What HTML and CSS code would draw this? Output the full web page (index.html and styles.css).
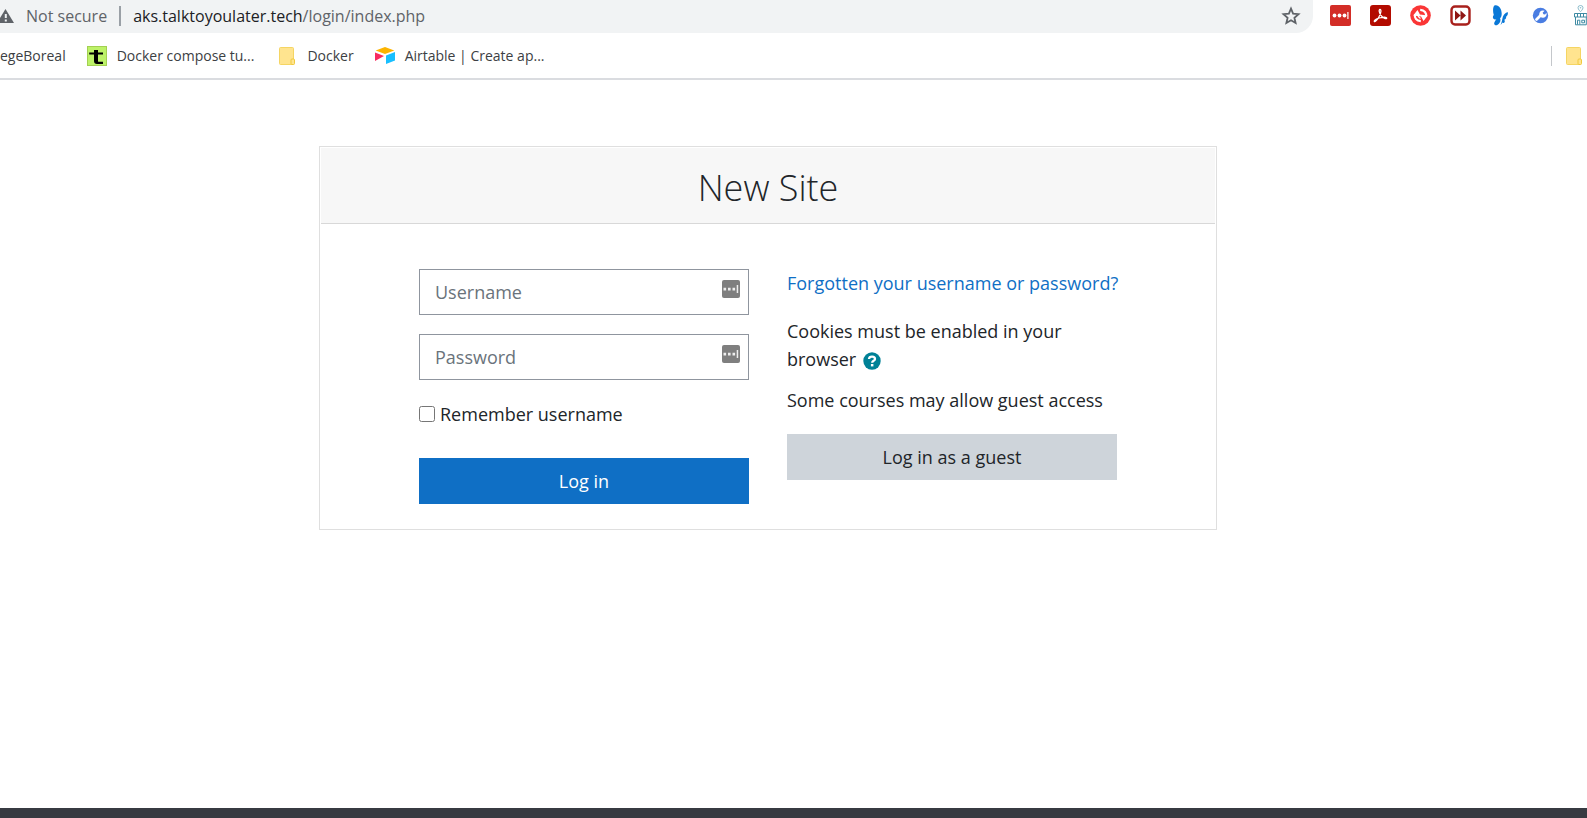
FILE: index.html
```html
<!DOCTYPE html>
<html lang="en">
<head>
<meta charset="utf-8">
<title>New Site: Log in to the site</title>
<link rel="stylesheet" href="styles.css">
</head>
<body>
<header class="browser">
  <div class="toolbar">
    <div class="omnibox">
      <svg class="warn" width="14" height="14" viewBox="0 0 14 14" aria-hidden="true"><path d="M5.500 0L14 14H-3z" fill="#5f6368"/><path d="M4.800 5h2v4h-2zM4.800 10.400h2v2h-2z" fill="#f1f3f4"/></svg>
      <span class="status">Not secure</span>
      <span class="sep"></span>
      <span class="url">aks.talktoyoulater.tech<span class="path">/login/index.php</span></span>
      <button class="icon-btn star" type="button" aria-label="Bookmark this page"><svg width="20" height="20" viewBox="0 0 20 20"><path d="M10 2.600l2.100 5 5.400.5-4.100 3.600 1.200 5.300-4.600-2.800L5.400 17l1.200-5.300L2.500 8.100l5.400-.5z" fill="none" stroke="#5f6368" stroke-width="1.800"/></svg></button>
    </div>
    <div class="extensions">
      <button class="icon-btn" type="button" aria-label="Password manager"><svg width="21" height="21" viewBox="0 0 21 21"><rect width="21" height="21" rx="2" fill="#d32d27"/><circle cx="4.500" cy="10.500" r="1.900" fill="#fff"/><circle cx="9.500" cy="10.500" r="1.900" fill="#fff"/><circle cx="14.500" cy="10.500" r="1.900" fill="#fff"/><path d="M17.300 7h1.200v7h-1.200z" fill="#fff"/></svg></button>
      <button class="icon-btn" type="button" aria-label="PDF tools"><svg width="21" height="21" viewBox="0 0 21 21"><rect width="21" height="21" rx="3" fill="#b30b00"/><path d="M10 4.500c-1.500 0-.8 3.500 1.200 6.200 1.800 2.400 5.600 3.900 5.500 2.400 0-1.600-7.200-.7-10.300 1-2.200 1.200-2.600 2.500-1.600 2.400C7 16.200 10.800 9.500 10.900 6.500 11 5 10.700 4.500 10 4.500z" fill="none" stroke="#fff" stroke-width="1.300"/></svg></button>
      <button class="icon-btn" type="button" aria-label="Sync"><svg width="21" height="21" viewBox="0 0 21 21"><circle cx="10.500" cy="10.500" r="10.300" fill="#fa3636"/><path d="M10.800 16.200C6.500 16 4.200 12.800 5 9.500M10.200 4.800c4.300.2 6.600 3.400 5.800 6.700" fill="none" stroke="#fff" stroke-width="2.200"/><path d="M3.200 10.500L7.500 5l3.500 6.500zM17.800 10.500L13.500 16 10 9.500z" fill="#fff"/><path d="M7.500 8.500c.2 2.500 1.200 4 3 5" fill="none" stroke="#fff" stroke-width="1.200"/></svg></button>
      <button class="icon-btn" type="button" aria-label="Video speed"><svg width="21" height="21" viewBox="0 0 21 21"><rect x="1.500" y="1.500" width="18" height="18" rx="3.500" fill="#fff" stroke="#a8201c" stroke-width="2.400"/><path d="M5 5.500l5.500 5-5.500 5zM10.500 5.500l5.500 5-5.500 5z" fill="#8f1614"/></svg></button>
      <button class="icon-btn" type="button" aria-label="Butterfly"><svg width="21" height="21" viewBox="0 0 21 21"><path d="M5 .3C9-.5 12.300 4.500 11.600 10c-.2 1.700-.8 2.800-1.600 3.300 1.200 1.700 0 5.500-2.700 6.700-2.200.8-4-.8-2.700-3 .5-1 1-1.700 1.800-2.400C3 14.500 1.900 12.300 3.800 10 2.800 7 2.500 1 5 .3z" fill="#0a78d7"/><path d="M17.600 7c-2.700.8-4.800 3.500-5.300 7-.2 2-.9 4.200-1.800 6 .9-.8 1.600-1.700 2-2.600.9 1 2.200.6 2.300-.9 0-.7-.2-1.300-.5-1.800 1.600-.5 2-1.600 1.800-3 1.500-1 2.300-3.300 1.500-4.700z" fill="#0a78d7"/></svg></button>
      <button class="icon-btn" type="button" aria-label="Tools"><svg width="21" height="21" viewBox="0 0 21 21"><circle cx="10.500" cy="10.500" r="7.700" fill="#4a7de2"/><path d="M6.500 14.500l5-5" stroke="#fff" stroke-width="2.800" stroke-linecap="round"/><path d="M14.600 5.800l-2 2 .9 1.500 1.600.2 1.300-1.700a3.700 3.700 0 1 1-1.800-2z" fill="#fff"/></svg></button>
      <button class="icon-btn" type="button" aria-label="Store"><svg width="21" height="21" viewBox="0 0 21 21"><path d="M8 2.700a2.500 2.200 0 0 1 5 0c0 1.600-2.500 4-2.500 4S8 4.300 8 2.700z" fill="none" stroke="#8dbccb"/><circle cx="10.500" cy="2.800" r=".8" fill="#8dbccb"/><path d="M4.500 8.500h12.400v3.500H4.500zM5.500 12v7.800h10.800V12M7.500 8.500V12M10.500 8.500V12M13.500 8.500V12M7.500 19.500v-4.300h2.300v4.300M11.800 15.200h2.700v2.600h-2.700z" fill="none" stroke="#3e8aa3"/></svg></button>
    </div>
  </div>
  <nav class="bookmarks">
    <a class="bm" href="#">egeBoreal</a>
    <a class="bm" href="#"><svg width="20" height="20" viewBox="0 0 20 20"><rect x=".5" y=".5" width="19" height="19" fill="#bdf268" stroke="#a3d052"/><path d="M7 4h4v2.500h5v2h-5v6.500c0 .8.800 1 1.200.8H16V18H10c-2 0-3-1-3-3V8.500H2.200v-2H7z" fill="#000"/></svg>Docker compose tu...</a>
    <a class="bm folder" href="#"><svg width="16" height="18" viewBox="0 0 16 18"><rect x=".5" y=".5" width="14" height="17" rx="1" fill="#ffe48f" stroke="#f5d563"/><rect x="12" y="12" width="3.500" height="5.500" rx="1" fill="#ffe48f" stroke="#f0c93f"/></svg>Docker</a>
    <a class="bm" href="#"><svg width="20" height="17" viewBox="0 0 20 17"><path d="M10 0l9.300 3.500L10 7 .7 3.500z" fill="#fcb400"/><path d="M11 8.500L20 5v8.500L11 17z" fill="#18bfff"/><path d="M0 5.500l9 3.500-9 5z" fill="#f82b60"/></svg>Airtable | Create ap...</a>
    <span class="bm-sep"></span>
    <a class="bm last" href="#" aria-label="Other bookmarks"><svg width="16" height="18" viewBox="0 0 16 18"><rect x=".5" y=".5" width="14" height="17" rx="1" fill="#ffe48f" stroke="#f5d563"/><rect x="12" y="12" width="3.500" height="5.500" rx="1" fill="#ffe48f" stroke="#f0c93f"/></svg></a>
  </nav>
</header>
<main class="page">
  <section class="card">
    <h1 class="title">New Site</h1>
    <div class="columns">
      <form class="login">
        <div class="field">
          <input class="text" type="text" placeholder="Username" aria-label="Username">
          <svg class="key" width="18" height="18" viewBox="0 0 18 18" aria-hidden="true"><rect width="18" height="18" rx="2" fill="#7f7f7f"/><path d="M1.500 7.800h2.600v2.600H1.500zM6 7.800h2.600v2.600H6zM10.500 7.800h2.600v2.600h-2.600zM14.700 5h1.500v8h-1.500z" fill="#eee"/></svg>
        </div>
        <div class="field">
          <input class="text" type="password" placeholder="Password" aria-label="Password">
          <svg class="key" width="18" height="18" viewBox="0 0 18 18" aria-hidden="true"><rect width="18" height="18" rx="2" fill="#7f7f7f"/><path d="M1.500 7.800h2.600v2.600H1.500zM6 7.800h2.600v2.600H6zM10.500 7.800h2.600v2.600h-2.600zM14.700 5h1.500v8h-1.500z" fill="#eee"/></svg>
        </div>
        <label class="remember"><input class="tick" type="checkbox">Remember username</label>
        <button class="btn primary" type="submit">Log in</button>
      </form>
      <div class="info">
        <a class="forgot" href="#">Forgotten your username or password?</a>
        <p class="cookies">Cookies must be enabled in your browser <button class="help" type="button" aria-label="Help with cookies"><svg width="18" height="18" viewBox="0 0 18 18"><circle cx="9" cy="9" r="8.700" fill="#008196"/><path d="M6 7c.3-3.200 6-3 6 0 0 2-2.800 1.700-2.800 3.700" fill="none" stroke="#fff" stroke-width="2.300"/><path d="M7.900 12h2.500v2.400H7.900z" fill="#fff"/></svg></button></p>
        <p class="guest">Some courses may allow guest access</p>
        <button class="btn secondary" type="button">Log in as a guest</button>
      </div>
    </div>
  </section>
</main>
<footer class="footer"></footer>
</body>
</html>
```
FILE: styles.css
```css
* { box-sizing: border-box; }
body {
  margin: 0;
  min-height: 100vh;
  display: flex;
  flex-direction: column;
  background: #fff;
  color: #212529;
  font: 18px/28px "Open Sans", "Noto Sans", sans-serif;
}
a { color: inherit; text-decoration: none; }
p { margin: 0; }
svg { display: block; flex: none; }
button, input { font: inherit; }
.browser { border-bottom: 2px solid #dadce0; overflow: hidden; }
.toolbar { display: flex; height: 33px; }
.omnibox {
  flex: 1;
  display: flex;
  align-items: center;
  padding: 0 12px 2px 0;
  border-radius: 0 0 17px 0;
  background: #f1f3f4;
  font-size: 16px;
}
.status { margin-left: 12px; color: #5f6368; }
.sep { width: 2px; height: 20px; margin: 0 12px; background: #9aa0a6; }
.url { color: #202124; }
.path { color: #5f6368; }
.icon-btn { padding: 0; border: 0; background: none; }
.star { margin-left: auto; }
.extensions { display: flex; align-items: center; gap: 19px; width: 274px; padding: 0 0 2px 17px; overflow: hidden; }
.extensions .icon-btn { flex: none; }
.bookmarks { display: flex; align-items: center; height: 45px; padding-right: 5px; color: #3c4043; font-size: 14px; }
.bm { display: flex; align-items: center; gap: 10px; margin-right: 21px; white-space: nowrap; }
.bm.folder { gap: 12px; margin-left: 4px; }
.bm-sep { width: 1px; height: 20px; margin: 0 14px 0 auto; background: #c4c7cb; }
.bm.last { margin: 0; }
.page { flex: 1; padding: 66px 51px 40px 0; }
.card { max-width: 898px; margin: 0 auto; border: 1px solid #dfdfdf; padding: 1px 1px 25px; }
.title {
  margin: 0;
  padding: 17px 0 13px;
  border-bottom: 1px solid #d8d8d8;
  background: #f7f7f7;
  text-align: center;
  font-size: 36px;
  font-weight: 300;
  line-height: 45px;
}
.columns { display: grid; grid-template-columns: repeat(2, minmax(0, 1fr)); gap: 38px; padding: 45px 98px 0; }
.field { position: relative; margin-bottom: 19px; }
.text {
  display: block;
  width: 100%;
  height: 46px;
  padding: 0 15px;
  border: 1px solid #8f959e;
  border-radius: 0;
  background: #fff;
  color: #495057;
}
.text::placeholder { color: #6a737b; }
.key { position: absolute; top: 11px; right: 9px; }
.remember { display: flex; align-items: center; gap: 5px; margin: 20px 0 30px; }
.tick { width: 16px; height: 16px; margin: 0; }
.btn { display: block; width: 100%; height: 46px; padding: 0; border: 0; }
.primary { background: #0f6fc5; color: #fff; }
.secondary { margin-top: 20px; background: #ced4da; color: #212529; }
.forgot { display: block; color: #0f6fc5; white-space: nowrap; }
.cookies { margin-top: 20px; }
.guest { margin-top: 13px; white-space: nowrap; }
.help { display: inline-block; margin-left: 2px; padding: 0; border: 0; background: none; vertical-align: middle; }
.footer { height: 10px; background: #373a41; }
```
